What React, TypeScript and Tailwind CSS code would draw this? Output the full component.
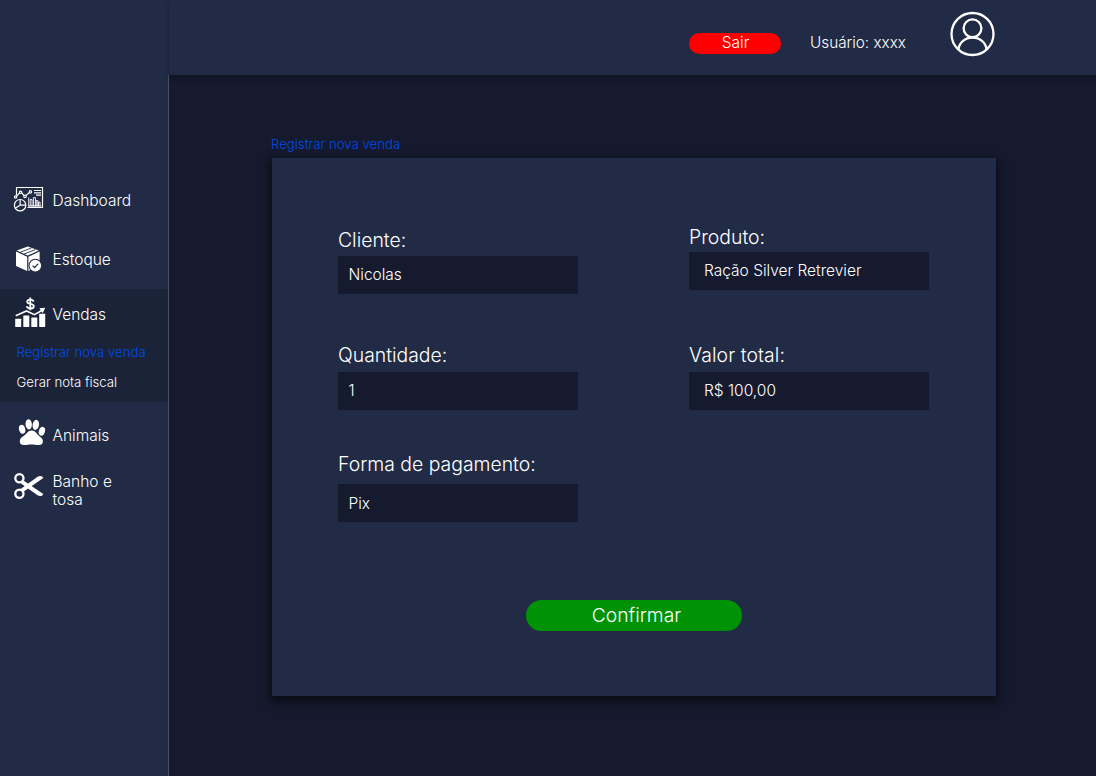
import type { ReactNode } from "react";

function DashboardIcon() {
  return (
    <svg width="32" height="28" viewBox="13 185 32 28" fill="none" stroke="white" strokeWidth="1.2" className="block">
      <path d="M16.5 195V187.5H42.5V207.5H27.5" />
      <path d="M16.6 196.1L19.6 192.9M21.7 193L24.2 195.6M26 195.6L29.4 192.5" />
      <circle cx="15.6" cy="197" r="1.2" />
      <circle cx="20.6" cy="192.3" r="1.2" />
      <circle cx="25" cy="196.4" r="1.2" />
      <circle cx="30.4" cy="191.9" r="1.2" />
      <path d="M34 190.5H41M34 192.8H41M36 195.2H41" />
      <path d="M28.7 206V197.5M30.2 206V199.5H32V206M33.4 206V197.6H35.4V206M36.2 206V200.5H37.8V206M38.5 206V202H40V206" strokeWidth="0.9" />
      <path d="M28.2 206H41.2" />
      <circle cx="20.1" cy="205.2" r="5.7" />
      <path d="M20.1 199.5V205.2H26M20.1 205.2L15.5 208" />
    </svg>
  );
}

function BoxIcon() {
  return (
    <svg width="30" height="28" viewBox="14 245 30 28" className="block">
      <path d="M16.8 250.5L27.8 246.6L38.8 250.5L27.8 255.6Z" fill="white" />
      <path d="M16 251.6L27.2 256.7V271L16 266Z" fill="white" />
      <path d="M28.4 256.7L39.6 251.6V266L28.4 271Z" fill="white" />
      <path d="M20.3 252.2L31.4 248M24.2 254L35.3 249.6" stroke="#222b45" strokeWidth="0.9" />
      <circle cx="35.3" cy="265.6" r="6.8" fill="#222b45" />
      <circle cx="35.3" cy="265.6" r="5.8" fill="white" />
      <path d="M32.6 265.6L34.6 267.6L38 263.9" fill="none" stroke="#222b45" strokeWidth="1.3" />
    </svg>
  );
}

function SalesIcon() {
  return (
    <svg width="32" height="32" viewBox="14 296 32 32" className="block">
      <g fill="white">
        <rect x="15.2" y="318.8" width="6" height="8.2" rx="0.4" />
        <rect x="23.3" y="315.4" width="6" height="11.6" rx="0.4" />
        <rect x="31.3" y="317.6" width="6" height="9.4" rx="0.4" />
        <rect x="39.2" y="313.8" width="6" height="13.2" rx="0.4" />
        <path d="M39.4 308.2L45.2 307.8L42.8 313.2Z" />
      </g>
      <path d="M15.7 315.8L26.5 311L34.4 314.7L42.3 310.2" fill="none" stroke="white" strokeWidth="1.6" />
      <path
        d="M33.5 301.6C33.2 300.3 32 299.6 30.3 299.6C28.4 299.6 27.2 300.4 27.2 301.8C27.2 305 33.8 302.7 33.8 306.2C33.8 307.7 32.4 308.5 30.4 308.5C28.4 308.5 27 307.7 26.8 306.2M30.3 297.4V310.3"
        fill="none"
        stroke="white"
        strokeWidth="1.8"
      />
    </svg>
  );
}

function PawIcon() {
  return (
    <svg width="30" height="30" viewBox="17 418 30 30" fill="white" className="block">
      <ellipse cx="22.1" cy="429.3" rx="3.1" ry="4.5" transform="rotate(-15 22.1 429.3)" />
      <ellipse cx="28.7" cy="424.3" rx="3.2" ry="5.1" transform="rotate(-5 28.7 424.3)" />
      <ellipse cx="35.8" cy="424.9" rx="3.2" ry="5.1" transform="rotate(10 35.8 424.9)" />
      <ellipse cx="41.9" cy="431.2" rx="3" ry="4.5" transform="rotate(18 41.9 431.2)" />
      <path d="M31.7 430.4C27.8 430.4 26.4 434.2 23.6 436C20.8 437.8 19.8 439 19.8 441.3C19.8 443.9 21.4 445.1 24 445.1C27 445.1 28.6 444.5 31.3 444.5C34 444.5 35.7 445.1 38.7 445.1C41.3 445.1 42.9 443.9 42.9 441.3C42.9 439 41.5 437.8 39.2 436C36.8 434.1 35.4 430.4 31.7 430.4Z" />
    </svg>
  );
}

function ScissorsIcon() {
  return (
    <svg width="32" height="30" viewBox="13 471 32 30" className="block">
      <g fill="none" stroke="white" strokeWidth="2.3">
        <circle cx="19.4" cy="478.3" r="4.1" />
        <circle cx="19.4" cy="493.8" r="4.1" />
      </g>
      <path d="M22 479.4L43.3 493.9C42.4 496.2 40 496.6 37.6 495.3L21 483.4Z" fill="white" />
      <path d="M22 492.7L43.3 478.1C42.4 475.8 40 475.4 37.6 476.7L21 488.7Z" fill="white" />
    </svg>
  );
}

function UserIcon() {
  return (
    <svg width="46" height="46" viewBox="0 0 46 46" fill="none" stroke="white" strokeWidth="2.3" className="block">
      <circle cx="22.5" cy="23" r="21" />
      <circle cx="22.5" cy="17.3" r="8.9" />
      <path d="M8.4 38.4C9.3 31.2 15.1 26.6 22.5 26.6C29.9 26.6 35.7 31.2 36.6 38.4" />
    </svg>
  );
}

function NavItem({ icon, label, pad, className, textClass = "" }: { icon: ReactNode; label: string; pad: string; className: string; textClass?: string }) {
  return (
    <a className={`flex items-center text-[15.5px] leading-[18px] ${className}`}>
      <span className={`w-[52.5px] shrink-0 ${pad}`}>{icon}</span>
      <span className={`w-[90px] ${textClass}`}>{label}</span>
    </a>
  );
}

function Field({ label, value, className = "", labelClass, valueClass }: { label: string; value: string; className?: string; labelClass: string; valueClass: string }) {
  return (
    <div className={`w-[240px] ${className}`}>
      <div className={`text-[19.4px] whitespace-nowrap ${labelClass}`}>{label}</div>
      <div className={`h-[37.5px] bg-[#161a2f] text-[15.5px] leading-5 ${valueClass}`}>{value}</div>
    </div>
  );
}

export default function App() {
  return (
    <div className="flex h-[776px] w-[1096px] overflow-hidden bg-[#161a2f] font-['Inter',sans-serif] font-[340] text-white">
      <aside className="flex w-[169px] shrink-0 flex-col bg-[#222b45]">
        <div className="h-[75px]" />
        <nav className="flex-1 border-r border-[#4b5066] pt-[95px]">
          <NavItem icon={<DashboardIcon />} label="Dashboard" pad="pl-[13px] -mt-0.5" className="h-[59px]" textClass="pt-0.5" />
          <NavItem icon={<BoxIcon />} label="Estoque" pad="pl-[14px]" className="h-[60px]" textClass="pt-0.5" />
          <div className="h-[113px] bg-[#1b2339]">
            <NavItem icon={<SalesIcon />} label="Vendas" pad="pl-[14px] -mt-1" className="h-[50px]" textClass="pt-0.5" />
            <a className="-mt-0.5 block pl-[16.5px] text-[13.2px] leading-[30px] font-[360] whitespace-nowrap text-[#004be6]">Registrar nova venda</a>
            <a className="block pl-[16.5px] text-[13.2px] leading-[30px] font-[360] whitespace-nowrap">Gerar nota fiscal</a>
          </div>
          <NavItem icon={<PawIcon />} label="Animais" pad="pl-[17px] -mt-1" className="mt-[5px] h-[56px]" textClass="pt-0.5" />
          <NavItem icon={<ScissorsIcon />} label="Banho e tosa" pad="pl-[13px] -mt-2.5" className="mt-[9px] h-[38px]" />
        </nav>
      </aside>
      <div className="flex flex-1 flex-col">
        <header className="flex h-[74.5px] shrink-0 items-start bg-[#222b45] shadow-[0_3px_5px_rgba(0,0,0,0.3)]">
          <button className="mt-[33px] ml-[520px] h-[21px] w-[92px] rounded-full bg-[#ff0000] pb-0.5 pl-px text-[15.5px] leading-[18px]">Sair</button>
          <span className="mt-[33px] ml-[29px] w-[110px] text-[15.3px] leading-5">Usuário: xxxx</span>
          <span className="mt-[11px] ml-[30px]"><UserIcon /></span>
        </header>
        <main className="pt-[59.5px] pl-[102px]">
          <h1 className="h-[24px] text-[13.2px] leading-5 font-[360] text-[#004be6]">Registrar nova venda</h1>
          <section className="ml-px h-[538px] w-[724px] bg-[#222b45] pt-[68px] pl-[66px] shadow-[0_4px_8px_3px_rgba(0,0,0,0.5)]">
            <div className="grid grid-cols-[351px_240px] grid-rows-[117px_111px_146px]">
              <Field label="Cliente:" value="Nicolas" className="pt-[3px]" labelClass="h-[27px] leading-[22px]" valueClass="pl-[10.5px] pt-[9px]" />
              <Field label="Produto:" value="Ração Silver Retrevier" labelClass="h-[26px] leading-[22px]" valueClass="pl-[15px] pt-[9px]" />
              <Field label="Quantidade:" value="1" labelClass="h-[29px] leading-6" valueClass="pl-[10.5px] pt-[9px]" />
              <Field label="Valor total:" value="R$ 100,00" labelClass="h-[29px] leading-6 tracking-[0.1px]" valueClass="pl-[15px] pt-[9px]" />
              <Field label="Forma de pagamento:" value="Pix" labelClass="h-[30px] leading-5" valueClass="pl-[10.5px] pt-[10px]" />
            </div>
            <button className="ml-[187.5px] block h-[31px] w-[216px] rounded-full bg-[#009205] pl-1.5 text-[19.3px] leading-[31px]">Confirmar</button>
          </section>
        </main>
      </div>
    </div>
  );
}
